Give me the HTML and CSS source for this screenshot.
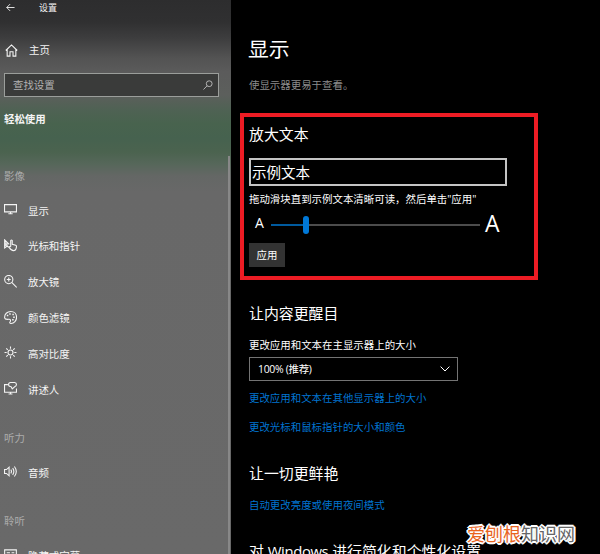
FILE: index.html
```html
<!DOCTYPE html>
<html lang="zh-CN">
<head>
<meta charset="utf-8">
<title>设置</title>
<link rel="stylesheet" href="styles.css">
</head>
<body>
<div class="window">
  <aside class="sidebar">
    <header class="titlebar">
      <svg class="back" viewBox="0 0 10 10"><path d="M9.5 5H.8M4.6 1.2.8 5l3.8 3.8"/></svg>
      <span>设置</span>
    </header>
    <a class="home">
      <svg class="icon" viewBox="0 0 12 12"><path d="M.7 6 6 .9 11.3 6M2 5v6.2h2.6V7.2h2.8v4H10V5"/></svg>
      <span>主页</span>
    </a>
    <div class="search">
      <span>查找设置</span>
      <svg viewBox="0 0 10 10"><circle cx="6.2" cy="3.7" r="2.9"/><path d="M4.1 5.8.5 9.5"/></svg>
    </div>
    <h2 class="category">轻松使用</h2>
    <nav class="nav">
      <section class="group">
        <h3>影像</h3>
        <a><svg class="icon" viewBox="0 0 12 12"><path d="M.5 1.5h11v6.7H.5zM6 8.2v2M4 9.9h4"/></svg><span>显示</span></a>
        <a><svg class="icon" viewBox="0 0 12 12"><path d="M4.2 7.6 3 6.5.6 8.3V.8l4.2 4.1M6.2 7V1.4q.7-1 1.4 0v3.5l3.2.8q.9.4.7 1.6c-.2 2-.9 3.4-2.7 3.4-2 0-2.7-.8-4.2-3.2q.4-1 1.6-.2M1.7 3v3.5M2.8 4v2"/></svg><span>光标和指针</span></a>
        <a><svg class="icon" viewBox="0 0 12 12"><circle cx="4.4" cy="4.2" r="3.8"/><path d="m7.1 6.9 4.6 4.6M4.4 2.4V6M2.6 4.2h3.6"/></svg><span>放大镜</span></a>
        <a><svg class="icon" viewBox="0 0 12 12"><path d="M.6 6.3C.3 2.8 3 .5 6.2.5s5.4 2.3 5.4 5.3c0 3.3-2.3 5.7-5.1 5.7-1.3 0-1.5-.8-.8-1.7.8-1.3 0-2.4-1.3-2.2C3 7.8.9 8 .6 6.3z"/><path stroke-width="1.4" d="M2.6 4.2h1.4M4.8 2.7h1.4M7.7 3.3h1.4M8.5 5.7h1.4M7.5 8.1h1.4"/></svg><span>颜色滤镜</span></a>
        <a><svg class="icon" viewBox="0 0 12 12"><circle cx="6" cy="6" r="2.3"/><path d="M6 .5v2M6 9.5v2M.5 6h2M9.5 6h2M2.1 2.1l1.4 1.4M8.5 8.5l1.4 1.4M2.1 9.9l1.4-1.4M8.5 3.5l1.4-1.4"/></svg><span>高对比度</span></a>
        <a><svg class="icon" viewBox="0 0 12 12"><path d="M3.6 2.4H.5v7h11V6M4.2 11h3.6M6 9.4V11M6 .5h3.8q1.7.2 1.7 1.9T9.8 4.4L7.6 6.3 6.6 4.4Q4.2 4.3 4.2 2.4T6 .5z"/></svg><span>讲述人</span></a>
      </section>
      <section class="group">
        <h3>听力</h3>
        <a><svg class="icon" viewBox="0 0 12 12"><path d="M.5 4.2h1.8L4.7 2v8L2.3 7.8H.5zM6.3 4.3q1.2 1.7 0 3.4M8 2.9q2.2 3.1 0 6.2M9.6 1.4q3.5 4.6 0 9.2"/></svg><span>音频</span></a>
      </section>
      <section class="group">
        <h3>聆听</h3>
        <a><svg class="icon" viewBox="0 0 12 12"><path d="M.6 .8h10.8v9H.6zM2.5 3.5h3M7 3.5h2.5M2.5 7h7"/></svg><span>隐藏式字幕</span></a>
      </section>
    </nav>
    <div class="scrollbar"></div>
  </aside>
  <main class="content">
    <h1>显示</h1>
    <p class="intro">使显示器更易于查看。</p>
    <section class="highlight">
      <h2>放大文本</h2>
      <div class="sample">示例文本</div>
      <p class="hint">拖动滑块直到示例文本清晰可读，然后单击<span class="quote">"</span>应用<span class="quote">"</span></p>
      <div class="slider">
        <span class="small-a">A</span>
        <div class="track"><div class="fill"></div><div class="thumb"></div><div class="rest"></div></div>
        <span class="large-a">A</span>
      </div>
      <button class="apply">应用</button>
    </section>
    <section class="scale">
      <h2>让内容更醒目</h2>
      <p class="label">更改应用和文本在主显示器上的大小</p>
      <div class="select"><span>100% (推荐)</span><svg viewBox="0 0 10 6"><path d="m.6.6 4.4 4.4L9.4.6"/></svg></div>
      <a class="link">更改应用和文本在其他显示器上的大小</a>
      <a class="link">更改光标和鼠标指针的大小和颜色</a>
    </section>
    <section class="vivid">
      <h2>让一切更鲜艳</h2>
      <a class="link">自动更改亮度或使用夜间模式</a>
    </section>
    <section class="simplify">
      <h2>对 <span class="latin">Windows</span> 进行简化和个性化设置</h2>
    </section>
  </main>
  <div class="watermark"><span>爱刨根</span>知识网</div>
</div>
</body>
</html>
```
FILE: styles.css
```css
* { box-sizing: border-box; }
body {
  margin: 0;
  background: #000;
  color: #fff;
  font: 10.45px/16px "Open Sans", "Noto Sans CJK SC", sans-serif;
}
h1, h2, h3, p { margin: 0; font-weight: 400; }
svg { fill: none; stroke: currentColor; flex: none; }
.window {
  position: relative;
  display: flex;
  width: 600px;
  height: 554px;
  overflow: hidden;
}

.sidebar {
  position: relative;
  width: 231px;
  height: 554px;
  overflow: hidden;
  color: #f4f4f4;
  background: linear-gradient(#2d2d2e 0, #303031 22px, #3d3d3e 38px, #535353 58px, #5b5b5b 72px, #5c5f5c 95px, #4e6253 111px, #48634e 124px, #46624f 138px, #4b634f 152px, #56675a 164px, #646765 176px, #686868 192px, #696969 100%);
}
.titlebar { display: flex; align-items: center; height: 15px; padding-left: 6px; font-size: 9px; }
.back { width: 9px; height: 9px; margin-right: 24px; }
.home { display: flex; align-items: center; height: 36px; margin-top: 17px; padding-left: 5px; }
.icon { width: 13px; height: 13px; margin-right: 11px; stroke-width: 1; }
.search {
  display: flex;
  align-items: center;
  justify-content: space-between;
  width: 215px;
  height: 24px;
  margin: 5px 0 0 4px;
  padding: 0 5px 0 8px;
  border: 1px solid #9b9e9b;
  background: #3a3b3a;
  color: #b2b2b2;
}
.search svg { width: 10px; height: 10px; }
.category { height: 24px; margin: 10px 0 33px 4px; font-size: 10.45px; font-weight: 700; line-height: 24px; }
.group { margin-bottom: 19px; padding-left: 4px; }
.group h3 { height: 23px; margin-bottom: 5.4px; font-size: 10.45px; line-height: 24px; color: #acacac; }
.group a { display: flex; align-items: center; height: 35.8px; }
.group a span { padding-top: .6px; }
.group .icon { margin-top: -1px; }
.scrollbar { position: absolute; top: 156px; right: 1px; width: 2px; height: 398px; background: #888; }

.content { flex: 1; padding: 33px 0 0 9px; }
.content > *:not(.highlight) { margin-left: 9px; }
h1 { height: 32px; font-size: 20.8px; line-height: 32px; text-indent: -1px; }
.intro { height: 16px; margin-top: 12px; color: #8b8b8b; }
h2 { font-size: 14.9px; line-height: 22px; white-space: nowrap; }
.highlight { width: 298px; height: 167px; margin-top: 20px; padding: 6px 5px 0; border: 4px solid #ed1c24; }
.sample { width: 258px; height: 28px; margin-top: 13px; padding-left: 1px; border: 2px solid #c4c4c4; font-size: 14.5px; line-height: 25px; }
.hint { margin-top: 5px; white-space: nowrap; }
.quote { display: inline-block; width: 4px; }
.slider { display: flex; align-items: center; height: 24px; margin-top: 4px; }
.small-a { width: 22px; padding-left: 6px; font-size: 14px; }
.large-a { margin-left: 5px; font-size: 23px; line-height: 24px; }
.track { display: flex; align-items: center; width: 209px; height: 18px; margin-top: 3px; }
.fill { width: 32px; height: 2px; background: #005a9e; }
.thumb { width: 6px; height: 18px; border-radius: 3px; background: #0078d7; }
.rest { flex: 1; height: 2px; background: #4c4c4c; }
.apply { display: block; width: 36px; height: 24px; margin-top: 8px; padding: 0; border: 0; background: #333; color: #fff; font: inherit; }
.scale { margin-top: 22px; }
.label { margin-top: 13px; }
.select {
  display: flex;
  align-items: center;
  justify-content: space-between;
  width: 209px;
  height: 24px;
  margin-top: 4px;
  padding: 0 7px 0 8px;
  border: 1px solid #747474;
}
.select span { letter-spacing: -.3px; }
.select svg { width: 10px; height: 6px; }
.link { display: block; color: #0074d0; white-space: nowrap; }
.select + .link { margin: 9px 0 13px; }
.vivid { margin-top: 27px; }
.vivid .link { margin-top: 13px; }
.simplify { margin-top: 27px; }
.latin { letter-spacing: -.4px; }
.watermark {
  position: absolute;
  left: 467px;
  top: 522px;
  font-size: 18px;
  line-height: 24px;
  color: #666;
  text-shadow: 1px 0 #fff, -1px 0 #fff, 0 1px #fff, 0 -1px #fff, 1px 1px #fff, -1px -1px #fff, 1px -1px #fff, -1px 1px #fff, 2px 0 #fff, -2px 0 #fff, 0 2px #fff, 0 -2px #fff;
  white-space: nowrap;
}
.watermark span { color: #e9641e; }
```
